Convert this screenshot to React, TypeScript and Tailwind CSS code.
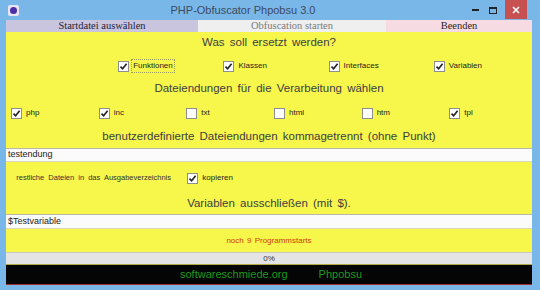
import React from "react";

const sans = { fontFamily: '"Liberation Sans", Arial, sans-serif' };

function Box({ checked }: { checked: boolean }) {
  return (
    <span className="inline-flex w-[11px] h-[11px] shrink-0 items-center justify-center border border-[#8e8e8e] bg-white">
      {checked && (
        <svg width="9" height="9" viewBox="0 0 9 9">
          <path d="M1.5 4.6 L3.6 6.8 L7.6 1.8" fill="none" stroke="#222" strokeWidth="1.6" />
        </svg>
      )}
    </span>
  );
}

function Check({ label, checked, focus }: { label: string; checked: boolean; focus?: boolean }) {
  return (
    <div className="flex items-center gap-[3px]">
      <Box checked={checked} />
      <span className={"text-[8px] text-[#1e1e1e] px-[1px] " + (focus ? "outline outline-1 outline-dotted outline-[#9a9a60]" : "")}>
        {label}
      </span>
    </div>
  );
}

function Heading({ children }: { children: React.ReactNode }) {
  return (
    <div className="h-full flex items-center justify-center text-[11.5px] text-[#404040] [word-spacing:2px]">
      {children}
    </div>
  );
}

export default function App() {
  const exts: [string, boolean][] = [
    ["php", true],
    ["inc", true],
    ["txt", false],
    ["html", false],
    ["htm", false],
    ["tpl", true],
  ];
  return (
    <div className="w-[540px] h-[290px] bg-[#79b7e9] flex flex-col overflow-hidden" style={sans}>
      {/* title bar */}
      <div className="h-[20px] flex items-center relative">
        <div className="ml-[8px] w-[11px] h-[11px] rounded-[2px] bg-[#e8e4f4] flex items-center justify-center">
          <div className="w-[7px] h-[7px] rounded-full bg-[#4a2fa8]" />
        </div>
        <div className="flex-1 text-center text-[11px] text-[#3c4a5c]">PHP-Obfuscator Phpobsu 3.0</div>
        <div className="flex items-start h-full">
          <div className="w-[17px] h-full flex items-center justify-center">
            <div className="w-[7px] h-[2px] bg-[#222]" />
          </div>
          <div className="w-[17px] h-full flex items-center justify-center">
            <div className="w-[8px] h-[7px] border border-[#222] border-t-2" />
          </div>
          <div className="ml-[4px] mr-[13px] w-[22px] h-[19px] bg-[#c75050] flex items-center justify-center">
            <svg width="8" height="8" viewBox="0 0 8 8">
              <path d="M1 1 L7 7 M7 1 L1 7" stroke="#fff" strokeWidth="1.6" />
            </svg>
          </div>
        </div>
      </div>

      <div className="mx-[6px] w-[526px] flex flex-col">
        {/* tabs */}
        <div className="h-[12px] flex text-[10.5px] leading-[12px]" style={{ fontFamily: '"Liberation Serif", "Times New Roman", serif' }}>
          <div className="w-[192px] bg-[#c9c5de] text-center text-[#1e1e3a]">Startdatei auswählen</div>
          <div className="w-[188px] bg-[#efefef] text-center text-[#7a7a7a]">Obfuscation starten</div>
          <div className="flex-1 bg-[#f7dbe3] text-center text-[#2a1e24]">Beenden</div>
        </div>

        {/* yellow panel */}
        <div className="h-[220px] bg-[#f6f64b] flex flex-col">
          <div className="h-[22px]"><Heading>Was soll ersetzt werden?</Heading></div>
          <div className="h-[24px] grid grid-cols-5 items-center">
            <div />
            <div className="pl-[7px]"><Check label="Funktionen" checked focus /></div>
            <div className="pl-[7px]"><Check label="Klassen" checked /></div>
            <div className="pl-[7px]"><Check label="Interfaces" checked /></div>
            <div className="pl-[7px]"><Check label="Variablen" checked /></div>
          </div>
          <div className="h-[22px]"><Heading>Dateiendungen für die Verarbeitung wählen</Heading></div>
          <div className="h-[26px] grid grid-cols-6 items-center">
            {exts.map(([n, c]) => (
              <div key={n} className="pl-[5px]"><Check label={n} checked={c} /></div>
            ))}
          </div>
          <div className="h-[22px]"><Heading>benutzerdefinierte Dateiendungen kommagetrennt (ohne Punkt)</Heading></div>
          <div className="h-[14px] bg-[#fbfbfb] border-t border-[#b8b8a8] border-b border-b-[#d8d8c0] flex items-center pl-[2px] text-[9px] text-[#222]">testendung</div>
          <div className="h-[32px] grid grid-cols-3 items-center">
            <div className="text-center text-[7.5px] text-[#333] [word-spacing:2px]">restliche Dateien in das Ausgabeverzeichnis</div>
            <div className="pl-[6px]"><Check label="kopieren" checked /></div>
            <div />
          </div>
          <div className="h-[20px]"><Heading>Variablen ausschließen (mit $).</Heading></div>
          <div className="h-[15px] bg-[#fbfbfb] border-t border-[#b8b8a8] border-b border-b-[#d8d8c0] flex items-center pl-[2px] text-[9px] text-[#222]">$Testvariable</div>
          <div className="flex-1 flex items-center justify-center text-[8px] text-[#d0400c] [word-spacing:1px]">noch 9 Programmstarts</div>
        </div>

        {/* progress */}
        <div className="h-[12px] bg-[#e4e4e4] border-t border-[#c8c8c8] flex items-center justify-center text-[8px] text-[#333]">0%</div>

        {/* footer */}
        <div className="h-[21px] bg-[#050505] border-t border-[#b0a840] border-b border-b-[#a03030] flex items-center text-[11px] text-[#1c9a1c]">
          <span className="ml-[174px]">softwareschmiede.org</span>
          <span className="ml-[31px]">Phpobsu</span>
        </div>
      </div>
    </div>
  );
}
